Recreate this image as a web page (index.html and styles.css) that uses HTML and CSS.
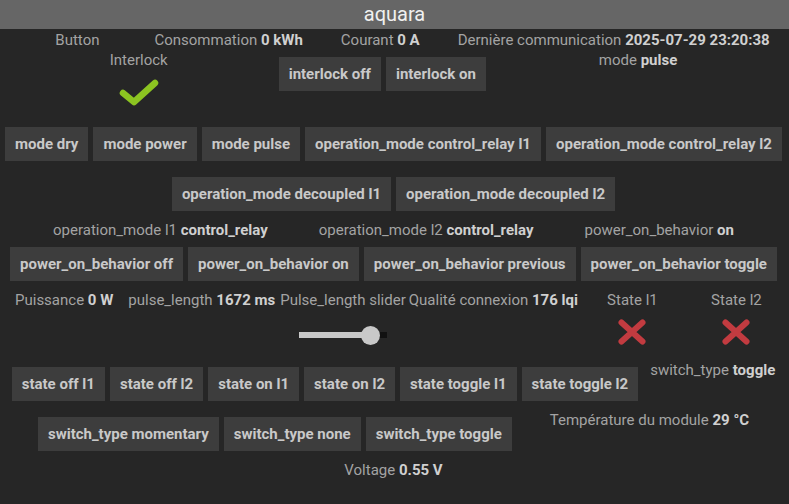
FILE: index.html
```html
<!DOCTYPE html>
<html>
    <head>
        <meta charset="utf-8">
        <link rel="stylesheet" href="styles.css">
    </head>
    <body>
        <div class="widget">
            <div class="widget-name">aquara</div>

            <div class="cmds">
                <div class="row row-top">
                    <div class="cmd info cmd-button">Button</div>
                    <div class="cmd info">Consommation <b>0 kWh</b></div>
                    <div class="cmd info">Courant <b>0 A</b></div>
                    <div class="cmd info">Dernière communication <b>2025-07-29 23:20:38</b></div>
                </div>

                <div class="row">
                    <div class="cmd binary interlock">
                        <div class="info">Interlock</div>
                        <div class="icon-box icon-check">
                            <svg width="42" height="32" viewBox="0 0 42 32">
                                <polyline points="5,16 16,25 37,6" fill="none" stroke="#8cc421" stroke-width="6.5" stroke-linecap="round" stroke-linejoin="round"/>
                            </svg>
                        </div>
                    </div>
                    <button>interlock off</button>
                    <button>interlock on</button>
                    <div class="cmd info mode-state">mode <b>pulse</b></div>
                </div>

                <div class="row">
                    <button>mode dry</button>
                    <button>mode power</button>
                    <button>mode pulse</button>
                    <button>operation_mode control_relay l1</button>
                    <button>operation_mode control_relay l2</button>
                </div>

                <div class="row">
                    <button>operation_mode decoupled l1</button>
                    <button>operation_mode decoupled l2</button>
                </div>

                <div class="row row-wide">
                    <div class="cmd info">operation_mode l1 <b>control_relay</b></div>
                    <div class="cmd info">operation_mode l2 <b>control_relay</b></div>
                    <div class="cmd info">power_on_behavior <b>on</b></div>
                </div>

                <div class="row">
                    <button>power_on_behavior off</button>
                    <button>power_on_behavior on</button>
                    <button>power_on_behavior previous</button>
                    <button>power_on_behavior toggle</button>
                </div>

                <div class="row row-measures">
                    <div class="cmd info puissance">Puissance <b>0 W</b></div>
                    <div class="cmd info pulse">pulse_length <b>1672 ms</b></div>
                    <div class="cmd slider-cmd">
                        <div class="info">Pulse_length slider</div>
                        <div class="slider-box">
                            <input type="range" class="slider" min="0" max="1845" value="1672">
                        </div>
                    </div>
                    <div class="cmd info">Qualité connexion <b>176 lqi</b></div>
                    <div class="cmd binary state state-l1">
                        <div class="info">State l1</div>
                        <div class="icon-box icon-cross">
                            <svg width="30" height="28" viewBox="0 0 30 28">
                                <path d="M4.5 4.5 L25.5 23.5 M25.5 4.5 L4.5 23.5" stroke="#c23b40" stroke-width="6" stroke-linecap="round"/>
                            </svg>
                        </div>
                    </div>
                    <div class="cmd binary state state-l2">
                        <div class="info">State l2</div>
                        <div class="icon-box icon-cross">
                            <svg width="30" height="28" viewBox="0 0 30 28">
                                <path d="M4.5 4.5 L25.5 23.5 M25.5 4.5 L4.5 23.5" stroke="#c23b40" stroke-width="6" stroke-linecap="round"/>
                            </svg>
                        </div>
                    </div>
                </div>

                <div class="row">
                    <button>state off l1</button>
                    <button>state off l2</button>
                    <button>state on l1</button>
                    <button>state on l2</button>
                    <button>state toggle l1</button>
                    <button>state toggle l2</button>
                    <div class="cmd info switch-state">switch_type <b>toggle</b></div>
                </div>

                <div class="row">
                    <button>switch_type momentary</button>
                    <button>switch_type none</button>
                    <button>switch_type toggle</button>
                    <div class="cmd info temperature">Température du module <b>29 °C</b></div>
                </div>

                <div class="row">
                    <div class="cmd info">Voltage <b>0.55 V</b></div>
                </div>
            </div>
        </div>
    </body>
</html>
```

FILE: styles.css
```css
body {
    margin: 0;
    background-color: #262626;
    font-family: Roboto, "Liberation Sans", sans-serif;
    font-size: 15px;
    color: #a3a3a3;
}

.widget {
    height: 504px;
}

.widget-name {
    height: 29px;
    line-height: 29px;
    background-color: #666666;
    color: #f0f0f0;
    font-size: 20px;
    text-align: center;
}

.cmds {
    padding: 1px 2px 0 0;
}

.row {
    display: flex;
    justify-content: center;
    align-items: flex-start;
    gap: 5px;
}

.info {
    line-height: 20px;
    white-space: nowrap;
}

.info b {
    color: #d0d0d0;
}

button {
    font-family: Roboto, "Liberation Sans", sans-serif;
    font-size: 15px;
    font-weight: bold;
    line-height: 20px;
    color: #c9c9c9;
    background-color: #3d3d3d;
    border: none;
    border-radius: 0;
    padding: 7px 10px;
    margin: 7px 0 9px 0;
    white-space: nowrap;
    cursor: pointer;
}

button:hover {
    background-color: #454545;
}

/* first line */
.row-top {
    gap: 38px;
}

.cmd-button {
    margin-left: 38px;
    margin-right: 17px;
}

/* interlock line */
.binary {
    display: flex;
    flex-direction: column;
    align-items: center;
}

.icon-box {
    height: 50px;
    display: flex;
    justify-content: center;
}

.icon-check {
    padding-top: 7px;
    height: 43px;
}

.icon-cross {
    padding-top: 8px;
    height: 42px;
}

.interlock {
    margin-right: 106px;
}

.mode-state {
    margin-left: 108px;
}

.row-wide {
    gap: 51px;
}

/* measures line */
.row-measures {
    justify-content: flex-start;
    gap: 0;
    padding-left: 15px;
}

.puissance {
    margin-right: 15px;
}

.pulse {
    margin-right: 5px;
}

.slider-cmd {
    display: flex;
    flex-direction: column;
    align-items: center;
    margin-right: 3px;
}

.slider-box {
    height: 50px;
    display: flex;
    align-items: center;
}

.slider {
    -webkit-appearance: none;
    appearance: none;
    width: 88px;
    height: 6px;
    margin: 0;
    background: linear-gradient(to right, #c8c8c8 0, #c8c8c8 82%, #111111 82%);
    outline: none;
}

.slider::-webkit-slider-thumb {
    -webkit-appearance: none;
    width: 19px;
    height: 19px;
    border-radius: 50%;
    background-color: #c8c8c8;
    border: none;
}

.state {
    width: 73px;
}

.state-l1 {
    margin-left: 18px;
}

.state-l2 {
    margin-left: 31px;
}

.switch-state {
    margin-left: 7px;
}

.temperature {
    margin-left: 33px;
}
```
